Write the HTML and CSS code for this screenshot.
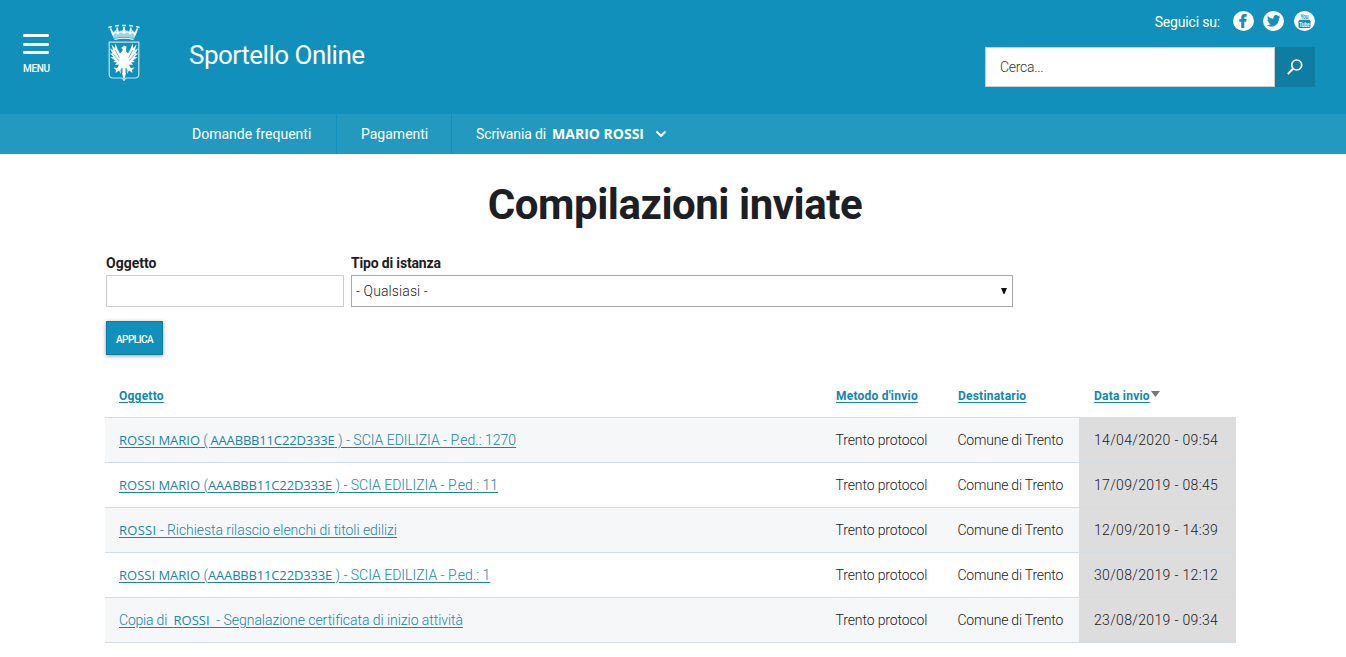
FILE: index.html
```
<!DOCTYPE html>
<html lang="it">
<head>
<meta charset="utf-8">
<title>Sportello Online - Compilazioni inviate</title>
<link rel="stylesheet" href="styles.css">
</head>
<body>
<header class="header">
  <button class="menu" type="button">
    <span class="menu-bars"><i></i><i></i><i></i></span>
    <span class="menu-label">MENU</span>
  </button>
  <svg class="crest" viewBox="0 0 32 57" width="32" height="57" aria-hidden="true">
    <path fill="#fff" opacity=".6" d="M2 4 5 8 9 5 12 8 16 4.500 20 8 23 5 27 8 30 4 26.500 14.500Q16 12 5.500 14.500Z"/>
    <g fill="none" stroke="#fff">
      <path stroke-width="1.800" opacity=".85" d="M2.500 4.500 5.500 11.500M9 3.500 10 10M16 3V10M23 3.500 22 10M29.500 4.500 26.500 11.500"/>
      <path stroke-width="1.600" opacity=".9" d="M.5 3.500 4 2.500M7 2l4-.5M14 1.500h4M21 1.500l4 .5M28 2.500l3.500 1"/>
      <path stroke-width="1.600" opacity=".75" d="M4 9q2 1 3.500-1 2.500 2.500 5-.5 3.500 2.500 7 0 2.500 3 5 .5 1.500 2 3.500 1"/>
      <path stroke-width="1.200" d="M6.500 15.300Q16 13.200 25.500 15.300"/>
      <path stroke-width="1.200" opacity=".75" d="M1.200 18.200H30.800V50.500Q30.800 54 27 54H18L16 56.500 14 54H5Q1.200 54 1.200 50.500Z"/>
    </g>
    <g fill="#fff">
      <path d="M13 24 16 21.500 18.500 22.500 18 27 20 29.500 22.500 25 24.500 19.500 25.200 24 28.500 20.500 27 26 30 24.500 27.500 29.500 30 29.500 26.500 33 29.500 33 25 36.500 27 38 23 38.500 25 41 21 40.500 22 43 18.500 43 18 49 16 56.500 14 49 13.500 43 10 43 11 40.500 7 41 9 38.500 5 38 7 36.500 2.500 33 5.500 33 2 29.500 4.500 29.500 2 24.500 5 26 3.500 20.500 6.800 24 7.500 19.500 9.500 25 12 29.500 14.500 27 14.500 25Z"/>
      <path d="M12 41 9 44 5.500 43.500 8 46 7.500 49 11 46.500 13 50 12.500 46 14 43ZM20 41l3 3 3.500-.5L24 46l.5 3-3.500-2.500L19 50l.5-4L18 43Z"/>
    </g>
    <path fill="none" stroke="#1190bb" stroke-width=".6" d="M7 26l4.500 8M5 30l6 7M25 26l-4.500 8M27 30l-6 7M14.300 44v5M17.700 44v5"/>
  </svg>
  <a class="site-name">Sportello Online</a>
  <div class="tools">
    <div class="social">
      <span class="social-label">Seguici su:</span>
      <svg class="facebook" viewBox="0 0 21 20" width="21" height="20"><ellipse cx="10.500" cy="10" rx="10.500" ry="10" fill="#fff"/><path fill="#1190bb" d="M8.300 17V10.700H6.300V7.900h2V6.300c0-2.200 1.300-3.300 3.300-3.300h2v2.800h-1.300c-.8 0-1 .3-1 1v1.100h2.300l-.4 2.800h-1.900V17Z"/></svg>
      <svg class="twitter" viewBox="0 0 21 20" width="21" height="20"><ellipse cx="10.500" cy="10" rx="10.500" ry="10" fill="#fff"/><path fill="#1190bb" d="M17.200 6.100l-1.300 1.400c.1 4.600-3.200 8-7.500 8-1.700 0-3.200-.5-4.400-1.300 1.500.1 2.900-.3 4-1.100-1.200-.1-2.200-.9-2.500-1.900h1.100c-1.300-.4-2.200-1.400-2.200-2.800l1.200.3C4.500 7.800 4.200 6.300 4.900 4.900c1.500 1.700 3.300 2.600 5.500 2.800-.4-1.900.9-3.600 2.800-3.600.9 0 1.600.3 2.100.9l1.800-.6-1 1.400Z"/></svg>
      <svg class="youtube" viewBox="0 0 21 20" width="21" height="20"><ellipse cx="10.500" cy="10" rx="10.500" ry="10" fill="#fff"/><rect x="4.500" y="8.700" width="12" height="8.300" rx="1.500" fill="#1190bb"/><g class="yt-text"><text x="10.500" y="7.800" font-size="7" fill="#1190bb" textLength="8" lengthAdjust="spacingAndGlyphs">You</text><text x="10.500" y="15.500" font-size="7" fill="#fff" textLength="10.500" lengthAdjust="spacingAndGlyphs">Tube</text></g></svg>
    </div>
    <form class="search">
      <input type="text" placeholder="Cerca..." aria-label="Cerca">
      <button type="button" aria-label="Cerca"><svg viewBox="0 0 16 16" width="16" height="16" fill="none" stroke="#fff"><circle cx="9.700" cy="6" r="5" stroke-width="1.600"/><path d="M6 9.700.9 15" stroke-width="2"/></svg></button>
    </form>
  </div>
</header>
<nav class="nav">
  <a class="nav-item faq">Domande frequenti</a>
  <a class="nav-item pay">Pagamenti</a>
  <a class="nav-item desk"><span>Scrivania di</span><b>MARIO ROSSI</b><svg viewBox="0 0 12 8" width="12" height="8"><path d="M1.500 1.500 6 5.800l4.500-4.300" fill="none" stroke="#fff" stroke-width="2"/></svg></a>
</nav>
<main class="main">
  <h1>Compilazioni inviate</h1>
  <form class="filters">
    <div class="field subject"><label for="subject">Oggetto</label><input id="subject" type="text"></div>
    <div class="field kind"><label>Tipo di istanza</label><div class="select"><span>- Qualsiasi -</span><svg viewBox="0 0 6 6" width="6" height="6"><path d="M0 0h6L3.500 6h-1Z" fill="#111"/></svg></div></div>
  </form>
  <button class="apply" type="button">APPLICA</button>
  <table class="results">
    <colgroup><col class="c-subject"><col class="c-method"><col class="c-dest"><col class="c-date"></colgroup>
    <thead><tr><th><a>Oggetto</a></th><th><a>Metodo d'invio</a></th><th><a>Destinatario</a></th><th class="h-date"><a>Data invio</a><svg class="sort" viewBox="0 0 9 6" width="9" height="6"><path d="M0 0h9L4.500 6Z" fill="#777"/></svg></th></tr></thead>
    <tbody>
      <tr><td><a><span class="name">ROSSI MARIO</span><span class="paren"> ( </span><span class="code">AAABBB11C22D333E</span><span> ) - SCIA EDILIZIA - P.ed.: 1270</span></a></td><td class="method">Trento protocol</td><td class="dest">Comune di Trento</td><td class="date">14/04/2020 - 09:54</td></tr>
      <tr><td><a><span class="name">ROSSI MARIO</span><span> (</span><span class="code">AAABBB11C22D333E</span><span> ) - SCIA EDILIZIA - P.ed.: 11</span></a></td><td class="method">Trento protocol</td><td class="dest">Comune di Trento</td><td class="date">17/09/2019 - 08:45</td></tr>
      <tr><td><a><span class="name short">ROSSI</span><span class="request"> - Richiesta rilascio elenchi di titoli edilizi</span></a></td><td class="method">Trento protocol</td><td class="dest">Comune di Trento</td><td class="date">12/09/2019 - 14:39</td></tr>
      <tr><td><a><span class="name">ROSSI MARIO</span><span> (</span><span class="code">AAABBB11C22D333E</span><span> ) - SCIA EDILIZIA - P.ed.: 1</span></a></td><td class="method">Trento protocol</td><td class="dest">Comune di Trento</td><td class="date">30/08/2019 - 12:12</td></tr>
      <tr><td><a><span class="copy">Copia di&nbsp; </span><span class="name">ROSSI</span><span class="report">&nbsp; - Segnalazione certificata di inizio attività</span></a></td><td class="method">Trento protocol</td><td class="dest">Comune di Trento</td><td class="date">23/08/2019 - 09:34</td></tr>
    </tbody>
  </table>
</main>
</body>
</html>
```
FILE: styles.css
```
* { box-sizing: border-box; }
body { margin: 0; background: #fff; color: #1c2024; font-family: Roboto, "Open Sans", sans-serif; font-size: 14px; }
button, input { font-family: inherit; margin: 0; }
.header { display: flex; height: 114px; background: #1190bb; color: #fff; }
.menu { display: flex; flex-direction: column; align-items: flex-start; width: 108px; padding: 34px 0 0 23px; border: 0; background: none; color: #fff; }
.menu-bars { display: flex; flex-direction: column; justify-content: space-between; width: 26px; height: 20px; }
.menu-bars i { height: 3px; background: #fff; border-radius: 1px; }
.menu-label { margin-top: 9px; font-size: 10px; line-height: 12px; font-weight: 500; letter-spacing: -.35px; }
.crest { margin-top: 24px; }
.site-name { margin: 37px 0 0 49px; font-size: 26px; line-height: 36px; letter-spacing: -.5px; white-space: nowrap; }
.tools { width: 330px; margin: 11px 31px 0 auto; }
.social { display: flex; justify-content: flex-end; height: 20px; }
.social-label { margin-right: 13px; font-size: 14px; line-height: 22px; letter-spacing: -.18px; white-space: nowrap; }
.twitter { margin-left: 9px; }
.youtube { margin-left: 10px; overflow: visible; }
.yt-text { font-family: "Liberation Sans", sans-serif; font-weight: 700; text-anchor: middle; }
.search { display: flex; height: 40px; margin-top: 16px; }
.search input { width: 290px; padding: 0 14px; border: 1px solid #ccc; border-radius: 0; background: #fff; font-size: 14px; font-weight: 300; letter-spacing: -.3px; }
.search input::placeholder { color: #333; opacity: 1; }
.search button { width: 40px; padding: 2px 0 0; border: 0; background: #0f7da1; }
.nav { display: flex; height: 40px; padding-left: 168px; background: #2499bf; color: #fff; line-height: 40px; }
.nav-item { display: flex; align-items: center; padding-left: 24px; white-space: nowrap; }
.faq { width: 169px; border-right: 1px solid #1190bb; }
.pay { width: 115px; border-right: 1px solid #1190bb; }
.desk { letter-spacing: -.13px; }
.desk b { margin: 0 11px 0 6px; font-family: "Open Sans", sans-serif; font-weight: 700; font-size: 14px; letter-spacing: 0; }
.main { padding: 0 110px 0 105px; }
h1 { margin: 0; padding: 25px 0 0 9px; height: 99px; font-size: 42px; line-height: 52px; font-weight: 700; letter-spacing: -.46px; text-align: center; white-space: nowrap; }
.filters { display: flex; gap: 7px; padding-left: 1px; }
.field label { display: block; height: 22px; font-weight: 700; font-size: 14px; line-height: 21px; }
.kind label { letter-spacing: -.17px; }
.subject { width: 238px; }
.subject input { display: block; width: 100%; height: 32px; border: 1px solid #ccc; }
.kind { width: 662px; }
.select { display: flex; align-items: center; justify-content: space-between; height: 32px; padding: 0 5px 0 4px; border: 1px solid #a9a9a9; font-weight: 300; letter-spacing: .1px; }
.apply { display: block; width: 57px; height: 34px; margin: 14px 0 0 1px; padding: 2px 0 0; border: 1px solid #0f7da1; background: #1190bb; color: #fff; box-shadow: 0 1px 4px rgba(0,0,0,.4); font-size: 10px; font-weight: 500; letter-spacing: -.55px; }
.results { width: 1131px; margin-top: 17px; border-collapse: collapse; table-layout: fixed; }
.c-subject { width: 717px; }
.c-method { width: 122px; }
.c-dest { width: 135px; }
.c-date { width: 157px; }
th, td { height: 45px; padding: 0 0 0 14px; text-align: left; white-space: nowrap; }
th { padding-top: 3px; font-size: 12px; letter-spacing: .22px; color: #1186b3; }
th a, td a { text-decoration: underline; text-underline-offset: 2px; }
.h-date { padding-left: 15px; }
.sort { margin: 0 0 3px 1px; }
tbody tr { border-top: 1px solid #d3dce5; border-bottom: 1px solid #d3dce5; }
tbody tr:nth-child(odd) { background: #f5f7f9; }
td { font-weight: 300; }
td a { color: #1783ae; }
.method { padding-left: 13.5px; letter-spacing: -.12px; }
.dest { padding-left: 13.5px; letter-spacing: -.22px; }
.date { background: #ddd; padding-left: 15px; letter-spacing: .34px; }
.name, .code { font-family: "Open Sans", sans-serif; font-size: 13px; font-weight: 400; }
.code { letter-spacing: -.17px; }
.paren { letter-spacing: -.3px; }
.short { letter-spacing: .25px; }
.request { letter-spacing: -.05px; }
.copy { letter-spacing: -.2px; }
.report { letter-spacing: -.05px; }
```
